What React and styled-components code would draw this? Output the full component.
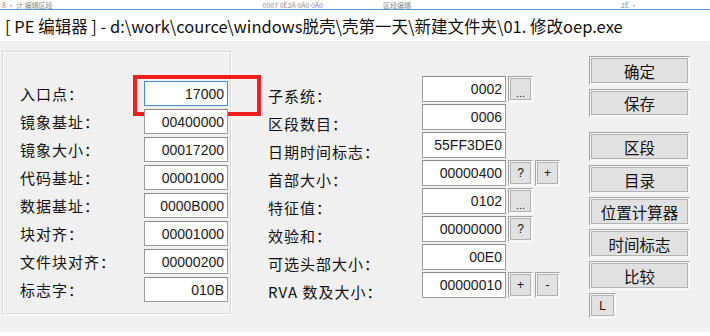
import React from 'react';
import styled, { createGlobalStyle } from 'styled-components';

const GlobalStyle = createGlobalStyle`
  body {
    margin      : 0;
    background  : #ffffff;
    font-family : "Noto Sans CJK SC", "Liberation Sans", sans-serif;
  }
`

const Page = styled.div`
  width           : 710px;
  height          : 336px;
  background      : #ffffff;
  overflow        : hidden;
`

const TopStrip = styled.div`
  height          : 9px;
  display         : flex;
  align-items     : flex-end;
  gap             : 60px;
  padding-left    : 2px;
`

const StripText = styled.span`
  font-size       : 7px;
  line-height     : 8px;
  color           : #8a8a8a;
  margin-left     : ${p => p.$ml || 0}px;
  white-space     : nowrap;
`

const TitleBar = styled.div`
  height          : 31px;
  border-top      : 1px solid #4a98dc;
  display         : flex;
  align-items     : center;
  padding-left    : 5px;
  font-size       : 16.5px;
  color           : #111111;
  white-space     : nowrap;
`

const Body = styled.div`
  height          : 291px;
  background      : #f0f0f0;
  display         : flex;
  align-items     : flex-start;
`

const GroupBox = styled.div`
  margin          : 10px 0 0 2px;
  width           : 229px;
  height          : 263px;
  padding         : 29px 0 0 17px;
  box-sizing      : border-box;
  border          : 1px solid #d9d9d9;
  box-shadow      : inset 1px 1px 0 #ffffff, 1px 1px 0 #ffffff;
`

const Column = styled.div`
  margin          : ${p => p.$top}px 0 0 ${p => p.$left}px;
  display         : flex;
  flex-direction  : column;
`

const Row = styled.div`
  display         : flex;
  align-items     : flex-start;
  height          : ${p => p.$h}px;
  margin-bottom   : ${p => 28 - p.$h}px;
`

const Label = styled.div`
  width           : ${p => p.$w}px;
  margin-top      : ${p => p.$dy}px;
  font-size       : 15px;
  line-height     : 20px;
  letter-spacing  : 1px;
  color           : #111111;
  white-space     : nowrap;
`

const FieldWrap = styled.div`
  position        : relative;
`

const Field = styled.div`
  width           : 84px;
  height          : ${p => p.$h}px;
  box-sizing      : border-box;
  background      : #ffffff;
  border          : 1px solid ${p => p.$focus ? '#3c8fdc' : '#9c9c9c'};
  border-top-color: ${p => p.$focus ? '#3c8fdc' : '#8a8a8a'};
  padding-right   : 3px;
  display         : flex;
  align-items     : center;
  justify-content : flex-end;
  font-family     : "Liberation Sans", "DejaVu Sans", sans-serif;
  font-size       : 14px;
  color           : #1a1a1a;
`

const Highlight = styled.div`
  position        : absolute;
  left            : -11px;
  top             : -6px;
  width           : 128px;
  height          : 41px;
  box-sizing      : border-box;
  border          : 4px solid #f01e1e;
  pointer-events  : none;
`

const Buttons = styled.div`
  display         : flex;
  gap             : 2px;
  margin-left     : 2px;
`

const Btn = styled.div`
  width           : ${p => p.$w}px;
  height          : ${p => p.$h}px;
  box-sizing      : border-box;
  margin-bottom   : ${p => p.$mb || 0}px;
  background      : #e1e1e1;
  border          : 1px solid;
  border-color    : #a3a3a3 #fbfbfb #fbfbfb #a3a3a3;
  box-shadow      : inset 0 0 0 1px #f4f4f4, inset 0 0 0 2px #b2b2b2;
  display         : flex;
  align-items     : center;
  justify-content : center;
  font-size       : ${p => p.$small ? 12 : 15.5}px;
  font-family     : ${p => p.$small ? '"Liberation Sans", sans-serif' : 'inherit'};
  color           : #111111;
  white-space     : nowrap;
`

const Dots = styled.span`
  margin-top      : 8px;
  font-size       : 11px;
`

const leftRows = [
  ['入口点：', '17000'],
  ['镜象基址：', '00400000'],
  ['镜象大小：', '00017200'],
  ['代码基址：', '00001000'],
  ['数据基址：', '0000B000'],
  ['块对齐：', '00001000'],
  ['文件块对齐：', '00000200'],
  ['标志字：', '010B'],
]

const midRows = [
  ['子系统：', '0002', ['dots']],
  ['区段数目：', '0006', []],
  ['日期时间标志：', '55FF3DE0', []],
  ['首部大小：', '00000400', ['?', '+']],
  ['特征值：', '0102', ['dots']],
  ['效验和：', '00000000', ['?']],
  ['可选头部大小：', '00E0', []],
  ['RVA 数及大小：', '00000010', ['+', '-']],
]

const sideButtons = [
  ['确定', 29, 4],
  ['保存', 28, 15],
  ['区段', 29, 4],
  ['目录', 29, 3],
  ['位置计算器', 29, 3],
  ['时间标志', 29, 3],
  ['比较', 29, 3],
]

const App = () => {
  return (
    <Page>
      <GlobalStyle />
      <TopStrip>
        <StripText>8 · 计 编辑区段</StripText>
        <StripText $ml={150}>0007 0E2A 0A0 0A0</StripText>
        <StripText>区段编辑</StripText>
        <StripText $ml={150}>2E ·</StripText>
      </TopStrip>
      <TitleBar>[ PE 编辑器 ] - d:\work\cource\windows脱壳\壳第一天\新建文件夹\01. 修改oep.exe</TitleBar>
      <Body>
        <GroupBox>
          {leftRows.map(([label, value], i) => (
            <Row key={label} $h={25}>
              <Label $w={124} $dy={3}>{label}</Label>
              <FieldWrap>
                <Field $h={25} $focus={i === 0}>{value}</Field>
                {i === 0 && <Highlight />}
              </FieldWrap>
            </Row>
          ))}
        </GroupBox>
        <Column $top={35} $left={37}>
          {midRows.map(([label, value, btns]) => (
            <Row key={label} $h={26}>
              <Label $w={154} $dy={10}>{label}</Label>
              <Field $h={26}>{value}</Field>
              <Buttons>
                {btns.map((b, j) => (
                  <Btn key={j} $w={25} $h={26} $small>
                    {b === 'dots' ? <Dots>...</Dots> : b}
                  </Btn>
                ))}
              </Buttons>
            </Row>
          ))}
        </Column>
        <Column $top={15} $left={29}>
          {sideButtons.map(([text, h, mb]) => (
            <Btn key={text} $w={101} $h={h} $mb={mb}>{text}</Btn>
          ))}
          <Btn $w={27} $h={25} $small>L</Btn>
        </Column>
      </Body>
    </Page>
  )
}

export default App;
